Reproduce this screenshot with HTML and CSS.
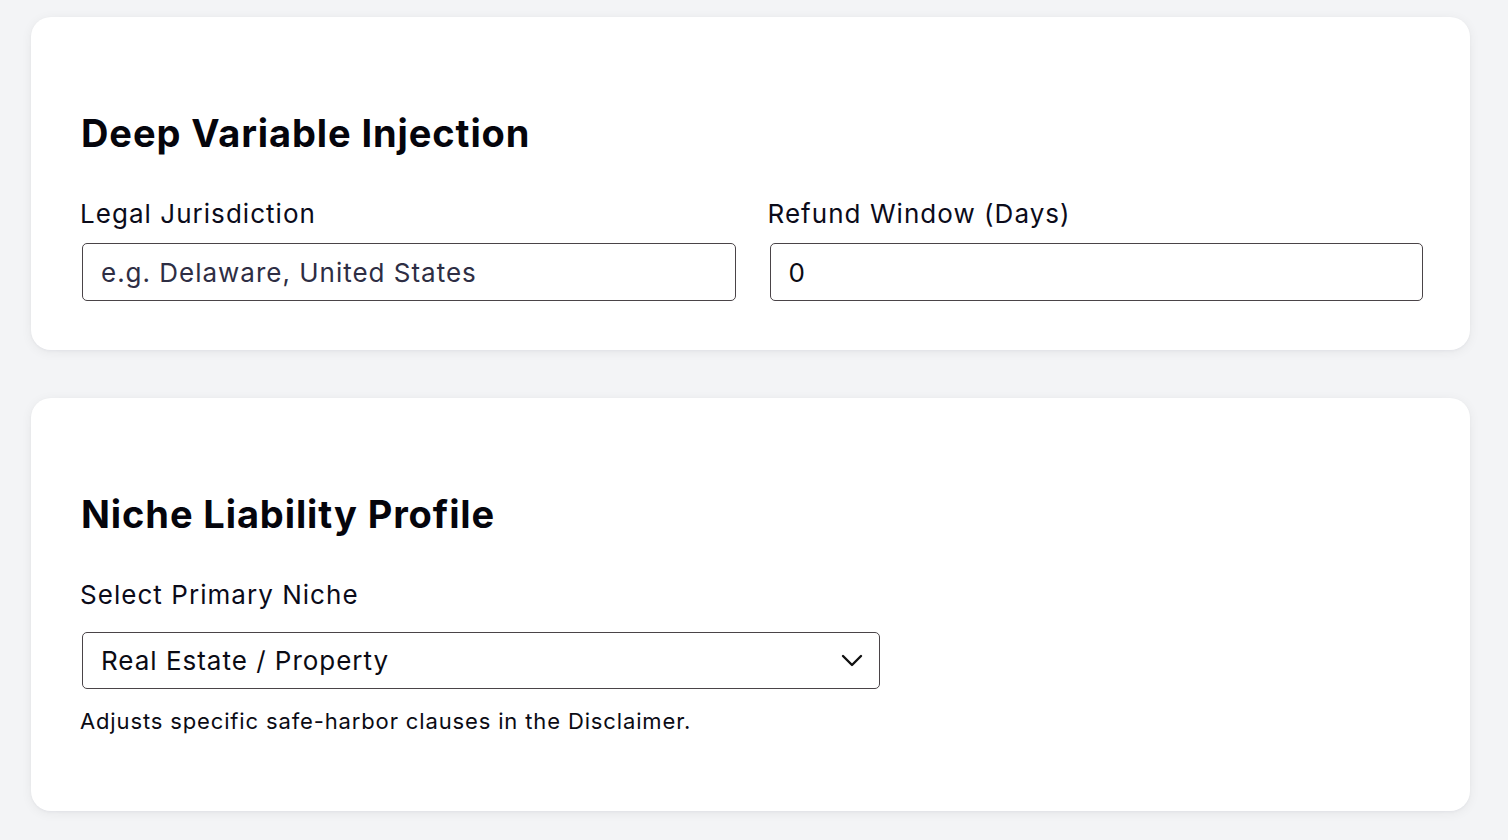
FILE: index.html
```html
<!DOCTYPE html>
<html lang="en">
<head>
<meta charset="utf-8">
<title>Settings</title>
<link rel="stylesheet" href="styles.css">
</head>
<body>
<main class="page">
  <section class="card">
    <h2 class="card-title">Deep Variable Injection</h2>
    <div class="grid-two">
      <div class="field">
        <label class="field-label" for="jur">Legal Jurisdiction</label>
        <input class="text-input" id="jur" type="text" placeholder="e.g. Delaware, United States">
      </div>
      <div class="field">
        <label class="field-label" for="ref">Refund Window (Days)</label>
        <input class="text-input" id="ref" type="text" value="0">
      </div>
    </div>
  </section>
  <section class="card card-last">
    <h2 class="card-title">Niche Liability Profile</h2>
    <div class="field">
      <label class="field-label field-label-select" for="niche">Select Primary Niche</label>
      <div class="select-wrap">
        <select class="select-input" id="niche">
          <option>Real Estate / Property</option>
        </select>
        <svg class="chevron" width="22" height="13" viewBox="0 0 22 13" aria-hidden="true">
          <path d="M2 2 L11 11 L20 2" fill="none" stroke="#111" stroke-width="2.4" stroke-linecap="round" stroke-linejoin="round"/>
        </svg>
      </div>
      <p class="help-text">Adjusts specific safe-harbor clauses in the Disclaimer.</p>
    </div>
  </section>
</main>
</body>
</html>
```
FILE: styles.css
```css
* { box-sizing: border-box; }
html, body {
  margin: 0;
  padding: 0;
  background: #f3f4f6;
}
body {
  font-family: Inter, "Noto Sans", "Liberation Sans", sans-serif;
  color: #0b0b14;
}
.page {
  padding: 17px 38px 0 31px;
}
.card {
  background: #ffffff;
  border-radius: 20px;
  box-shadow: 0 2px 12px rgba(15, 23, 42, 0.06), 0 1px 3px rgba(15, 23, 42, 0.04);
  padding: 91px 47px 49px 51px;
  margin-bottom: 48px;
}
.card-title {
  margin: 0 0 36px -1px;
  font-size: 38px;
  line-height: 51px;
  font-weight: 700;
  color: #05050c;
  letter-spacing: 0.9px;
}
.grid-two {
  display: grid;
  grid-template-columns: 1fr 1fr;
  column-gap: 34px;
}
.field {
  display: flex;
  flex-direction: column;
}
.field-label {
  font-size: 26px;
  line-height: 38px;
  font-weight: 400;
  color: #0b0b1a;
  margin: 0 0 10px -2px;
  letter-spacing: 0.04em;
}
.field-label-select {
  margin-bottom: 18px;
}
.text-input,
.select-input {
  height: 58px;
  width: 100%;
  border: 1.5px solid #4a4448;
  border-radius: 5px;
  background: #fff;
  font-family: inherit;
  font-size: 26px;
  letter-spacing: 0.038em;
  color: #0b0b14;
  padding: 0 18px;
  outline: none;
}
.text-input::placeholder {
  color: #2e2e44;
  opacity: 1;
}
.select-wrap {
  position: relative;
  width: 798px;
}
.select-input {
  appearance: none;
  -webkit-appearance: none;
  height: 57px;
}
.chevron {
  position: absolute;
  right: 17px;
  top: 22px;
  pointer-events: none;
}
.help-text {
  margin: 16px 0 25px -2px;
  font-size: 22px;
  line-height: 32px;
  color: #0b0b14;
  letter-spacing: 0.039em;
}
```
